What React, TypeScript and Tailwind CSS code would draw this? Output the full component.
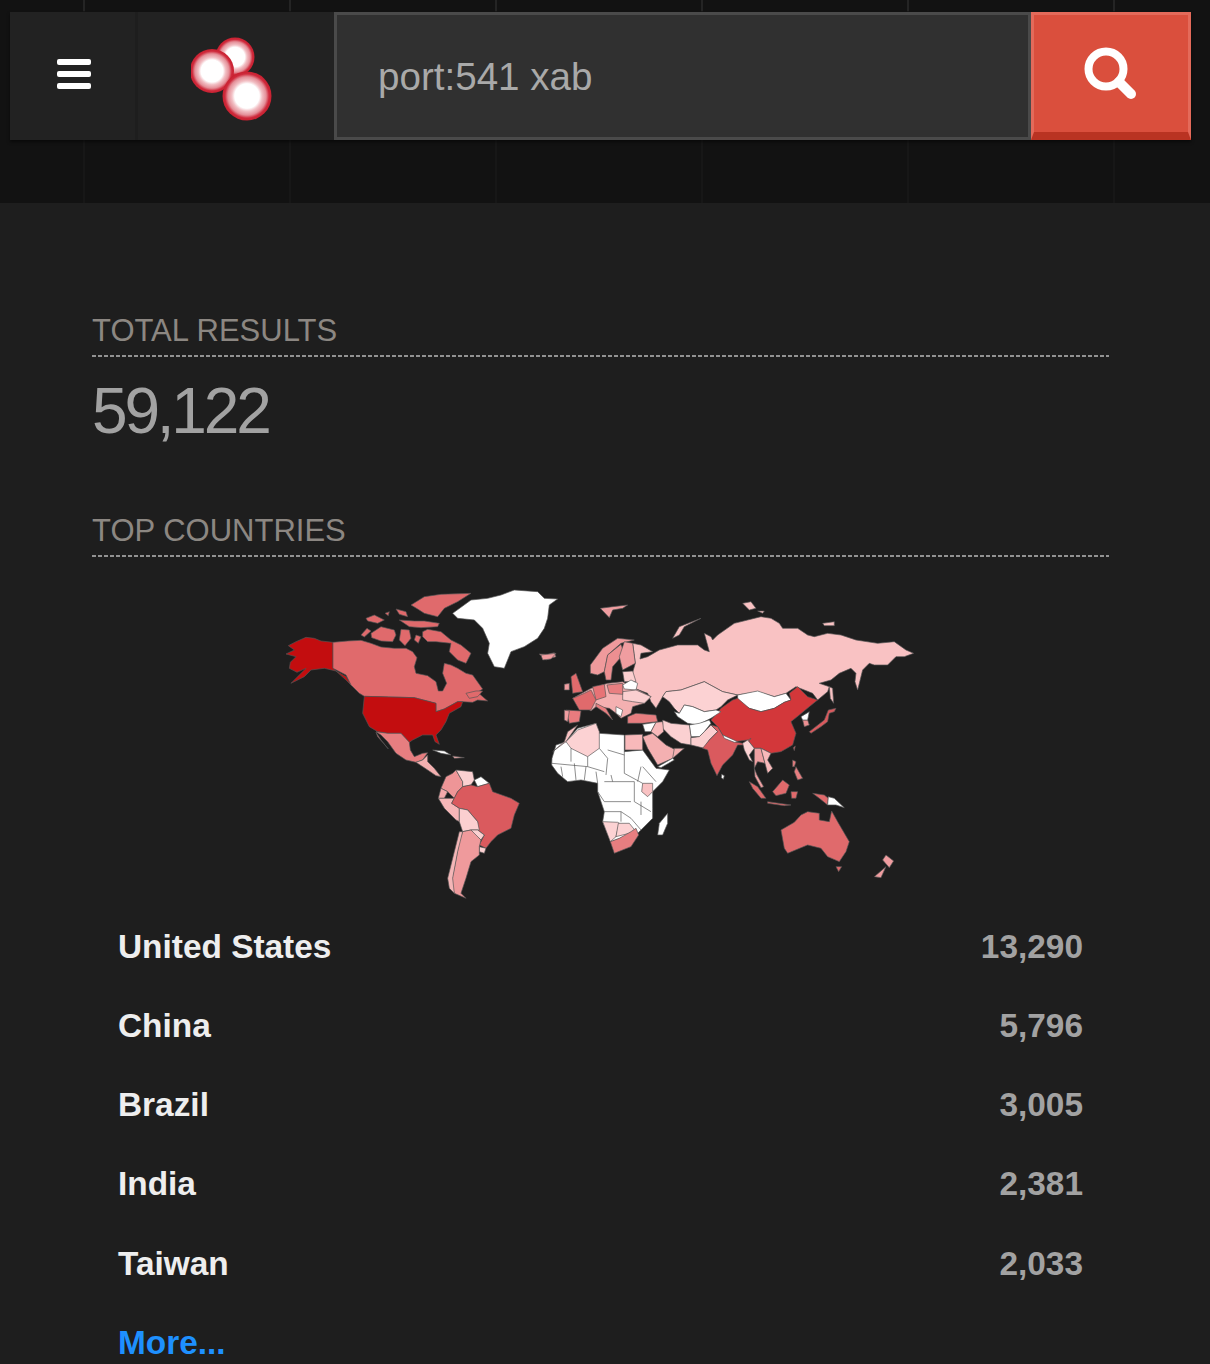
const A: [string, string][] = [
  ["#c30d0f", "M156,172 L120,168 L100,160 L75,157 L45,170 L22,182 L40,195 L15,207 L45,215 L28,232 L25,250 L48,262 L75,250 L30,295 L70,275 L90,255 L130,250 L165,258 L195,275 L212,302 L195,285 L156,250 Z"],
  ["#e06a6c", "M156,172 L200,168 L240,166 L270,175 L300,186 L340,190 L375,190 L395,200 L408,218 L400,245 L405,265 L440,272 L465,290 L472,318 L485,318 L497,295 L485,265 L490,235 L510,240 L530,250 L555,265 L575,270 L605,312 L590,322 L620,348 L590,345 L575,352 L545,350 L530,350 L490,372 L465,380 L465,355 L400,338 L250,334 L235,325 L210,300 L195,270 L156,250 Z"],
  ["#c30d0f", "M250,334 L400,338 L465,355 L465,380 L490,372 L530,350 L545,350 L540,365 L505,385 L495,410 L480,435 L465,450 L475,478 L462,470 L455,450 L425,450 L395,465 L385,472 L360,445 L320,445 L290,440 L265,425 L245,385 Z"],
  ["#e77e80", "M285,440 L320,445 L360,445 L385,472 L388,495 L400,515 L425,505 L440,503 L425,525 L405,532 L375,525 L345,505 L320,470 L300,450 Z"],
  ["#e77e80", "M285,442 L300,465 L322,492 L305,472 L290,455 Z"],
  ["#f4b0b0", "M405,532 L425,525 L440,510 L440,530 L460,550 L480,575 L465,572 L440,555 Z"],
  ["#e06a6c", "M240,150 L258,130 L270,138 L250,156 Z"],
  ["#e06a6c", "M270,145 L300,125 L340,135 L345,150 L335,170 L300,168 L272,158 Z"],
  ["#e06a6c", "M390,60 L430,35 L480,28 L570,25 L530,50 L490,70 L470,95 L430,85 L410,72 Z"],
  ["#e06a6c", "M425,140 L440,133 L480,140 L510,165 L540,180 L570,205 L555,235 L530,225 L505,200 L510,175 L465,170 L440,170 L425,155 Z"],
  ["#e06a6c", "M255,100 L280,90 L310,105 L290,115 L260,108 Z"],
  ["#e06a6c", "M345,72 L375,80 L380,95 L355,88 Z"],
  ["#e06a6c", "M355,105 L400,108 L430,108 L475,115 L470,125 L420,128 L385,125 Z"],
  ["#e06a6c", "M360,133 L385,135 L390,160 L372,182 L355,165 Z"],
  ["#e06a6c", "M405,150 L420,155 L412,175 L400,165 Z"],
  ["#e06a6c", "M312,85 L325,80 L322,92 Z"],
  ["#e06a6c", "M555,325 L585,318 L605,318 L590,335 L565,340 Z"],
  ["#ffffff", "M515,85 L570,45 L620,40 L660,30 L700,15 L770,20 L790,40 L830,42 L805,60 L800,100 L790,130 L770,160 L730,185 L690,200 L670,250 L640,245 L620,205 L625,175 L605,130 L580,105 L530,100 Z"],
  ["#f09da0", "M775,207 L800,208 L820,203 L825,215 L795,225 Z"],
  ["#ffffff", "M455,495 L490,498 L510,510 L480,505 Z"],
  ["#f4b0b0", "M515,513 L550,518 L520,520 Z"],
  ["#ee9597", "M515,565 L525,555 L545,590 L545,605 L530,620 L520,640 L500,620 L480,610 L495,575 Z"],
  ["#fbd0d1", "M525,555 L575,560 L580,585 L570,600 L545,605 L545,590 Z"],
  ["#ffffff", "M580,585 L600,575 L625,595 L590,605 Z"],
  ["#f4a9ab", "M480,610 L500,620 L490,640 L472,640 Z"],
  ["#f7b7b8", "M472,640 L490,640 L520,640 L512,655 L535,670 L535,710 L525,705 L490,670 Z"],
  ["#da5a5e", "M530,620 L545,605 L570,600 L590,605 L625,595 L635,620 L690,640 L715,655 L700,690 L690,730 L650,750 L630,770 L615,790 L595,780 L610,750 L590,735 L590,710 L560,675 L535,670 L512,655 Z"],
  ["#fbcfd0", "M535,670 L560,675 L590,710 L595,735 L570,735 L545,740 L535,710 Z"],
  ["#fbd0d1", "M570,735 L590,735 L610,750 L600,765 L580,750 Z"],
  ["#fbd0d1", "M595,785 L615,790 L610,805 L595,800 Z"],
  ["#ef9a9c", "M545,740 L570,735 L600,765 L595,785 L595,810 L570,830 L555,880 L540,925 L555,940 L520,925 L510,895 L520,850 L535,770 Z"],
  ["#f4b6b7", "M535,740 L545,740 L530,800 L515,880 L520,925 L505,910 L500,880 L520,800 Z"],
];
const B: [string, string][] = [
  ["#f9c2c3", "M270,280 L283,235 L275,175 L300,180 L335,200 L300,205 L297,222 L320,215 L355,195 L410,180 L470,180 L490,195 L505,200 L490,145 L510,155 L515,165 L530,150 L580,115 L620,105 L660,95 L690,100 L715,115 L725,130 L770,130 L800,150 L820,155 L860,145 L900,150 L945,165 L1010,175 L1060,170 L1095,195 L1118,205 L1090,215 L1065,215 L1040,240 L1000,240 L985,235 L965,255 L950,315 L942,290 L945,265 L930,250 L895,265 L870,285 L835,295 L865,305 L860,320 L830,345 L815,325 L765,305 L735,325 L700,335 L650,320 L590,330 L545,320 L490,290 L420,315 L375,320 L365,335 L345,370 L330,350 L320,325 L280,310 Z"],
  ["#f9c2c3", "M395,160 L415,125 L480,100 L430,125 L415,150 Z"],
  ["#f09da0", "M178,70 L215,65 L260,60 L245,70 L215,75 L205,98 Z"],
  ["#f9c2c3", "M605,55 L630,50 L645,70 L625,75 Z"],
  ["#f9c2c3", "M650,78 L670,78 L665,85 Z"],
  ["#f9c2c3", "M845,115 L880,110 L880,122 L850,122 Z"],
  ["#f09da0", "M0,210 L45,205 L30,222 L5,225 Z"],
  ["#f4b0b1", "M95,340 L150,310 L200,295 L245,290 L330,335 L310,355 L275,365 L270,385 L240,400 L225,385 L205,370 L165,365 L150,378 Z"],
  ["#fcd2d3", "M365,335 L375,320 L420,315 L490,290 L545,320 L590,330 L560,345 L540,365 L525,375 L490,380 L455,365 L430,360 L415,385 L400,370 L385,350 Z"],
  ["#ffffff", "M590,330 L650,318 L700,335 L735,325 L750,345 L730,352 L700,370 L660,380 L625,370 L590,350 Z"],
  ["#d3373a", "M510,405 L540,370 L575,345 L590,340 L625,370 L660,380 L700,370 L730,352 L750,345 L745,325 L770,305 L800,335 L830,345 L805,365 L775,390 L750,410 L765,445 L755,480 L720,500 L690,505 L660,490 L640,490 L620,465 L580,470 L545,450 L530,425 Z"],
  ["#ffffff", "M400,380 L415,385 L430,360 L455,365 L490,380 L525,375 L540,380 L510,400 L470,420 L440,415 L410,395 Z"],
  ["#ffffff", "M445,420 L475,415 L505,405 L510,415 L490,440 L475,455 L450,455 Z"],
  ["#fbd0d1", "M365,405 L390,415 L445,420 L450,455 L450,480 L420,475 L390,455 L365,430 Z"],
  ["#fbcfd0", "M450,458 L475,455 L490,440 L510,420 L530,440 L505,465 L490,490 L450,480 Z"],
  ["#da5a5e", "M510,420 L530,425 L545,450 L580,470 L605,475 L630,460 L615,480 L590,480 L575,510 L545,540 L528,572 L510,535 L500,495 L485,490 L505,465 L530,440 Z"],
  ["#ffffff", "M545,450 L590,470 L580,472 L550,460 Z"],
  ["#fcd2d3", "M605,475 L620,465 L640,490 L625,510 L635,530 L625,525 L610,495 Z"],
  ["#f0a0a2", "M640,490 L660,490 L672,535 L650,530 L640,550 L640,520 Z"],
  ["#f8b9ba", "M660,490 L690,505 L680,525 L695,550 L680,565 L672,535 Z"],
  ["#f0a0a2", "M640,550 L648,570 L668,605 L660,608 L642,575 Z"],
  ["#e06a6c", "M625,590 L650,605 L675,640 L660,640 L635,610 Z"],
  ["#e06a6c", "M680,650 L750,660 L730,662 L680,655 Z"],
  ["#e06a6c", "M695,620 L725,585 L745,600 L735,625 L705,632 Z"],
  ["#e06a6c", "M750,620 L770,620 L765,640 L752,640 Z"],
  ["#e77e80", "M755,525 L765,530 L760,545 L755,545 Z"],
  ["#e77e80", "M765,545 L785,580 L770,585 L760,560 Z"],
  ["#e06a6c", "M815,625 L850,630 L862,640 L860,660 L835,640 Z"],
  ["#ffffff", "M862,635 L880,640 L910,668 L885,660 L860,660 Z"],
  ["#da5a5e", "M805,440 L850,405 L862,375 L885,370 L880,380 L865,385 L860,410 L840,425 L810,445 Z"],
  ["#f9c2c3", "M865,305 L875,310 L878,355 L868,340 Z"],
  ["#ed8f91", "M785,405 L800,405 L805,420 L790,425 Z"],
  ["#ffffff", "M780,395 L805,380 L800,405 L785,405 Z"],
  ["#e06a6c", "M757,488 L763,483 L760,497 Z"],
  ["#ffffff", "M542,568 L550,572 L547,583 L541,578 Z"],
  ["#e06a6c", "M720,735 L760,712 L780,690 L800,680 L835,685 L835,705 L865,710 L872,678 L890,710 L925,770 L915,800 L895,830 L860,815 L840,790 L800,780 L740,805 L730,790 Z"],
  ["#e06a6c", "M885,845 L902,845 L893,860 Z"],
  ["#f09da0", "M1035,810 L1058,828 L1045,848 L1025,825 Z"],
  ["#f09da0", "M1000,875 L1035,845 L1020,878 Z"],
  ["#ffffff", "M350,750 L355,715 L380,685 L380,715 L365,750 Z"],
  ["#ffffff", "M33,520 L45,480 L75,470 L110,430 L165,415 L175,445 L250,450 L250,500 L305,495 L345,550 L385,555 L365,590 L335,620 L335,670 L335,700 L300,735 L290,745 L280,745 L210,770 L185,710 L190,680 L170,620 L170,595 L120,585 L80,590 L50,565 L32,540 Z"],
  ["#f9c2c3", "M35,500 L70,470 L80,440 L110,420 L75,470 Z"],
  ["#fcd2d3", "M75,470 L110,435 L165,415 L175,440 L175,490 L140,515 L90,490 Z"],
  ["#f8b9ba", "M252,450 L305,448 L305,495 L252,495 Z"],
  ["#fcd2d3", "M185,710 L230,712 L235,715 L225,755 L208,770 Z"],
  ["#fcd2d3", "M232,715 L265,715 L285,740 L225,755 Z"],
  ["#e77e80", "M208,770 L235,760 L270,740 L285,730 L293,750 L270,785 L220,805 Z"],
  ["#f9c2c3", "M305,595 L335,595 L335,620 L320,635 L302,620 Z"],
  ["#f4b0b1", "M305,455 L335,445 L375,480 L415,500 L395,520 L350,540 L320,490 Z"],
  ["#f4b0b1", "M400,490 L430,490 L395,520 Z"],
  ["#ffffff", "M350,545 L395,520 L400,525 L360,548 Z"],
  ["#e77e80", "M260,395 L285,385 L345,390 L350,410 L305,415 L260,415 Z"],
  ["#ffffff", "M305,418 L345,412 L330,440 L312,440 Z"],
  ["#f8b9ba", "M330,440 L345,412 L365,410 L368,440 L350,455 Z"],
  ["#ef9a9c", "M148,240 L185,190 L230,160 L280,165 L240,175 L200,210 L190,260 L170,270 L148,265 Z"],
  ["#ed8f91", "M190,260 L200,210 L240,178 L250,205 L215,245 L210,285 L195,285 Z"],
  ["#f09da0", "M250,170 L275,175 L283,235 L245,255 L235,215 Z"],
  ["#fbcfd0", "M245,260 L275,258 L285,290 L250,290 Z"],
  ["#ffffff", "M245,300 L270,285 L290,295 L285,315 L250,312 Z"],
  ["#fbcfd0", "M245,320 L285,315 L330,335 L310,355 L275,350 L245,345 Z"],
  ["#e97f81", "M198,300 L245,295 L245,328 L205,325 Z"],
  ["#e77376", "M155,305 L190,298 L195,335 L165,345 Z"],
  ["#e06a6c", "M95,340 L130,325 L150,315 L165,345 L150,375 L115,375 Z"],
  ["#e06a6c", "M90,275 L105,265 L125,320 L95,325 Z"],
  ["#f09da0", "M70,298 L85,295 L85,315 L70,315 Z"],
  ["#e87b7e", "M75,375 L120,378 L115,410 L85,415 Z"],
  ["#f09da0", "M70,375 L85,378 L80,410 L70,405 Z"],
  ["#e77e80", "M165,355 L195,370 L215,405 L195,385 L165,365 Z"],
  ["#ffffff", "M225,365 L245,375 L240,395 L225,385 Z"],
];
const africaLines =
  "M90,490 L90,530 M140,515 L140,545 L190,560 M175,490 L200,520 L195,570 M250,500 L250,565 M200,495 L250,510 M33,535 L140,545 M100,535 L105,585 M190,590 L280,590 L280,650 M170,620 L190,650 L270,650 M190,680 L240,680 L240,710 M280,650 L330,680 M270,700 L300,735 M305,545 L345,590 M250,565 L305,595 M60,545 L65,575 M135,545 L130,585 M165,560 L170,595 M210,570 L215,590 M300,545 L290,590 M240,680 L270,700 M300,650 L300,690";

const rows = [
  ["United States", "13,290"],
  ["China", "5,796"],
  ["Brazil", "3,005"],
  ["India", "2,381"],
  ["Taiwan", "2,033"],
];

function WorldMap() {
  return (
    <svg viewBox="0 0 640 320" className="block h-[320px] w-[640px] blur-[0.35px]">
      <g transform="scale(0.3333)" stroke="#555" strokeWidth="2" strokeLinejoin="round">
        {A.map(([f, d], i) => <path key={i} d={d} fill={f} />)}
      </g>
      <g transform="translate(260,0) scale(0.3333)" stroke="#555" strokeWidth="2" strokeLinejoin="round">
        {B.map(([f, d], i) => <path key={i} d={d} fill={f} />)}
        <path d={africaLines} fill="none" />
      </g>
    </svg>
  );
}

function Logo() {
  const c = (cx: number, cy: number, r: number) => (
    <circle cx={cx} cy={cy} r={r} fill="url(#dot)" />
  );
  return (
    <svg viewBox="0 0 90 90" className="h-[90px] w-[90px]">
      <defs>
        <radialGradient id="dot">
          <stop offset="0.5" stopColor="#ffffff" />
          <stop offset="0.62" stopColor="#f2c0c5" />
          <stop offset="0.78" stopColor="#e48f98" />
          <stop offset="0.9" stopColor="#cf2a3c" />
          <stop offset="1" stopColor="#c8202f" />
        </radialGradient>
      </defs>
      {c(44, 26, 19.5)}
      {c(21, 40, 22)}
      {c(56, 65, 24.5)}
    </svg>
  );
}

export default function App() {
  return (
    <div className="min-h-[1364px] overflow-hidden bg-[#1e1e1e] font-['Liberation_Sans',Arial,sans-serif]">
      <header className="h-[203px] bg-[#121212] bg-[linear-gradient(90deg,#242424_2px,transparent_2px),linear-gradient(90deg,#171717_2px,transparent_2px)] bg-repeat-x [background-size:206px_11px,206px_100%] [background-position:83px_0,83px_0] px-[10px] pt-[12px]">
        <div className="flex h-[128px] w-[1181px] bg-[#1e1e1e] shadow-[0_2px_3px_rgba(0,0,0,0.5)]">
          <div className="mr-[3px] flex w-[125px] items-center justify-center bg-[#222222] pb-[4px] pl-[2px]">
            <div className="flex flex-col gap-[6px]">
              <span className="block h-[6px] w-[34px] rounded-[2px] bg-white" />
              <span className="block h-[6px] w-[34px] rounded-[2px] bg-white" />
              <span className="block h-[6px] w-[34px] rounded-[2px] bg-white" />
            </div>
          </div>
          <div className="flex w-[196px] items-center justify-center bg-[#222222]">
            <Logo />
          </div>
          <div className="flex w-[697px] items-center border-[3px] border-[#4a4a4a] bg-[#303030] pl-[41px] pt-[2px] text-[38.6px] leading-none text-[#a9a9a9]">
            port:541 xab
          </div>
          <div className="flex w-[160px] items-center justify-center border-x-[3px] border-t-[3px] border-b-[8px] border-x-[#e46a5a] border-t-[#e46a5a] border-b-[#b93322] bg-[#da4f3d]">
            <svg viewBox="0 0 54 54" className="h-[54px] w-[54px]" fill="none" stroke="#ffffff" strokeLinecap="round">
              <circle cx="22" cy="22" r="17.5" strokeWidth="8" />
              <path d="M35 35 L47 47" strokeWidth="10" />
            </svg>
          </div>
        </div>
      </header>
      <main className="pl-[92px] pr-[101px] pt-[108px]">
        <h2 className="h-[44px] pt-[1px] text-[31px] leading-[37px] font-normal text-[#8c8782]">TOTAL RESULTS</h2>
        <div className="h-[2px] bg-[repeating-linear-gradient(90deg,#929292_0_4px,transparent_4px_6px)]" />
        <div className="h-[154px] pt-[19px] text-[64px] leading-[70px] tracking-[-3.2px] text-[#a2a2a2]">59,122</div>
        <h2 className="h-[44px] pt-[1px] text-[31px] leading-[37px] font-normal text-[#8c8782]">TOP COUNTRIES</h2>
        <div className="h-[2px] bg-[repeating-linear-gradient(90deg,#929292_0_4px,transparent_4px_6px)]" />
        <div className="flex justify-center pt-[28px]">
          <WorldMap />
        </div>
        <ul className="px-[26px] pt-[2px]">
          {rows.map(([name, value]) => (
            <li key={name} className="flex h-[79.3px] items-center justify-between text-[33.4px] font-bold text-[#eeeeee]">
              <span>{name}</span>
              <span className="text-[#a2a2a2]">{value}</span>
            </li>
          ))}
          <li className="flex h-[79.3px] items-center text-[33.4px] font-bold text-[#1e90ff]">More...</li>
        </ul>
      </main>
    </div>
  );
}
